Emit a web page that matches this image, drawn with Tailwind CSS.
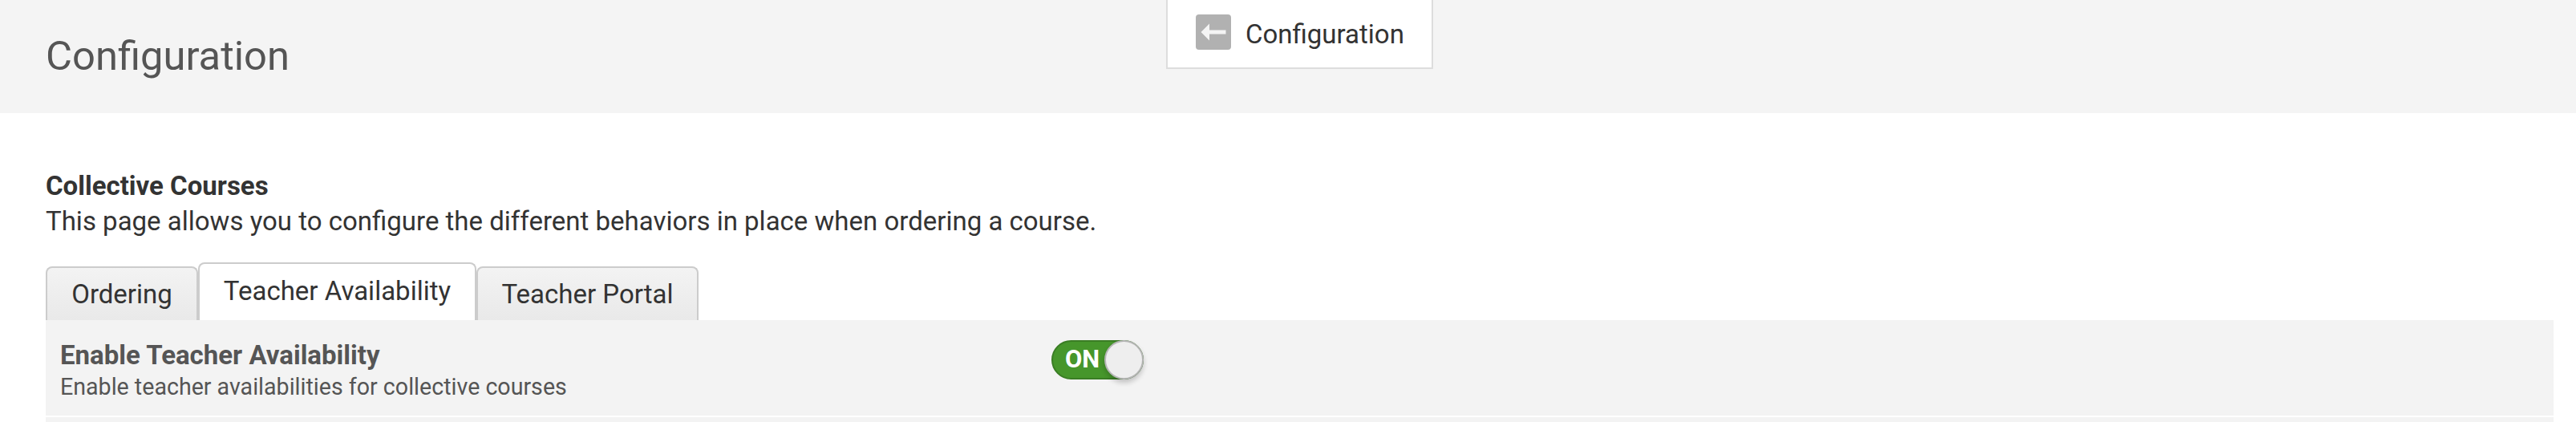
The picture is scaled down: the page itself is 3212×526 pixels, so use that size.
<!DOCTYPE html>
<html lang="en">
<head>
  <meta charset="UTF-8" />
  <title>Configuration</title>
  <script src="https://cdn.jsdelivr.net/npm/@tailwindcss/browser@4"></script>
</head>
<body class="bg-white font-['Roboto',sans-serif] h-[526px] overflow-hidden">

  <!-- HEADER -->
  <header class="relative h-[141px] bg-[#f4f4f4] pl-[57px] pt-[40px]">
    <h1 class="text-[50.7px] leading-[60px] font-normal text-[#555]">Configuration</h1>
    <div class="absolute left-[1454px] top-0 w-[333px] h-[86px] bg-white border-2 border-t-0 border-[#ddd] flex items-center pl-[35px] pb-[4px]">
      <span class="w-[44px] h-[44px] rounded-[4px] bg-[#b1b1b1] flex items-center justify-center">
        <svg width="32" height="24" viewBox="0 0 32 24" fill="none">
          <path d="M0.5 12 L11 1.5 L11 9.5 L31.5 9.5 L31.5 14.5 L11 14.5 L11 22.5 Z" fill="#f4f4f4" />
        </svg>
      </span>
      <span class="ml-[18px] pt-[5px] text-[33px] leading-[40px] text-[#333]">Configuration</span>
    </div>
  </header>

  <main class="pl-[57px] pr-[28px]">
    <div class="pt-[70px]">
      <p class="text-[33px] leading-[42px] mb-[2px] font-bold text-[#333]">Collective Courses</p>
      <p class="text-[33px] leading-[42px] text-[#333]">This page allows you to configure the different behaviors in place when ordering a course.</p>
    </div>

    <!-- TABS -->
    <div class="flex items-end h-[72px] mt-[30px]">
      <div class="w-[190px] h-[67px] rounded-t-[8px] border-2 border-b-0 border-[#ccc] bg-gradient-to-b from-[#f3f3f3] to-[#e9e9e9] flex items-center justify-center text-[33px] text-[#333]">Ordering</div>
      <div class="w-[347px] h-[72px] rounded-t-[8px] border-2 border-b-0 border-[#ccc] bg-white flex items-center justify-center pb-[2px] text-[33px] text-[#333]">Teacher Availability</div>
      <div class="w-[277px] h-[67px] rounded-t-[8px] border-2 border-b-0 border-[#ccc] bg-gradient-to-b from-[#f3f3f3] to-[#e9e9e9] flex items-center justify-center text-[33px] text-[#333]">Teacher Portal</div>
    </div>

    <!-- SETTINGS ROWS -->
    <div class="h-[119px] bg-[#f3f3f3] flex pl-[18px] pt-[23px]">
      <div class="w-[1236px]">
        <p class="text-[33px] leading-[41px] font-bold text-[#555]">Enable Teacher Availability</p>
        <p class="text-[28.6px] leading-[38px] text-[#555]">Enable teacher availabilities for collective courses</p>
      </div>
      <div class="relative w-[115px] h-[49px] mt-[2px] rounded-full bg-[#46962b] border-2 border-[#3a7d24] flex items-center pl-[15px]">
        <span class="text-[31px] font-bold text-white">ON</span>
        <span class="absolute right-[-2px] top-[-2px] w-[49px] h-[49px] rounded-full bg-[#eee] border-2 border-[#b5b5b5] shadow-[0_4px_6px_rgba(0,0,0,0.2)]"></span>
      </div>
    </div>
    <div class="h-[6px] mt-[2px] bg-[#f3f3f3]"></div>
  </main>
</body>
</html>
